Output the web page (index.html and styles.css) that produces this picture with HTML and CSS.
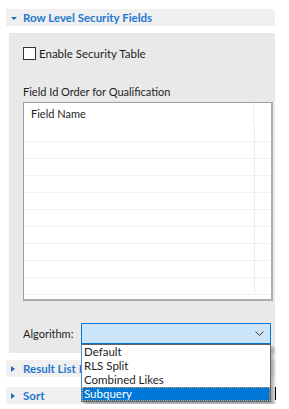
FILE: index.html
```html
<!DOCTYPE html>
<html lang="en">
<head>
  <meta charset="UTF-8" />
  <meta name="viewport" content="width=device-width, initial-scale=1" />
  <title>Row Level Security Fields</title>
  <link rel="stylesheet" href="styles.css">
</head>
<body>

<div class="editor">
  <div class="section-head">
    <span class="twisty open"></span>
    <span class="section-title">Row Level Security Fields</span>
  </div>

  <div class="section-body">
    <label class="check-row">
      <span class="checkbox"></span>
      <span>Enable Security Table</span>
    </label>

    <div class="field-label">Field Id Order for Qualification</div>

    <div class="grid">
      <div class="grid-head">
        <div class="cell">Field Name</div>
        <div class="cell spare"></div>
      </div>
      <div class="grid-row"><div class="cell"></div><div class="cell spare"></div></div>
      <div class="grid-row"><div class="cell"></div><div class="cell spare"></div></div>
      <div class="grid-row"><div class="cell"></div><div class="cell spare"></div></div>
      <div class="grid-row"><div class="cell"></div><div class="cell spare"></div></div>
      <div class="grid-row"><div class="cell"></div><div class="cell spare"></div></div>
      <div class="grid-row"><div class="cell"></div><div class="cell spare"></div></div>
      <div class="grid-row"><div class="cell"></div><div class="cell spare"></div></div>
      <div class="grid-row"><div class="cell"></div><div class="cell spare"></div></div>
      <div class="grid-row"><div class="cell"></div><div class="cell spare"></div></div>
      <div class="grid-row"><div class="cell"></div><div class="cell spare"></div></div>
    </div>

    <div class="algo-row">
      <span class="algo-label">Algorithm:</span>
      <div class="combo-wrap">
        <div class="combo">
          <svg class="chevron" width="9" height="6" viewBox="0 0 9 6">
            <path d="M0.5 0.5 L4.5 4.5 L8.5 0.5" fill="none" stroke="#3c3c3c" stroke-width="1"/>
          </svg>
        </div>
        <ul class="dropdown">
          <li>Default</li>
          <li>RLS Split</li>
          <li>Combined Likes</li>
          <li class="selected">Subquery</li>
        </ul>
      </div>
    </div>
  </div>

  <div class="section-head collapsed-gap">
    <span class="twisty"></span>
    <span class="section-title">Result List F</span>
  </div>

  <div class="section-head last">
    <span class="twisty"></span>
    <span class="section-title">Sort</span>
    <span class="caret"></span>
  </div>
</div>

</body>
</html>
```

FILE: styles.css
```css
html, body {
  margin: 0;
  padding: 0;
  background: #fff;
  font-family: Lato, "Noto Sans", sans-serif;
  font-size: 11px;
  color: #1e1e1e;
  overflow: hidden;
}

.editor {
  padding: 9px 14px 0 6px;
  width: 269px;
}

.section-head {
  position: relative;
  display: flex;
  align-items: center;
  height: 17px;
  background: #f0f0f0;
}

.section-head.collapsed-gap {
  margin-top: 7px;
}

.section-head.last {
  margin-top: 10px;
}

.twisty {
  width: 0;
  height: 0;
  margin: 0 8px 0 5px;
  border-left: 4px solid #1b6dbd;
  border-top: 3px solid transparent;
  border-bottom: 3px solid transparent;
}

.twisty.open {
  border-top: 3px solid #1b6dbd;
  border-left: 3px solid transparent;
  border-right: 3px solid transparent;
  border-bottom: 0;
  margin: 1px 6px 0 5px;
}

.section-title {
  font-size: 11.5px;
  font-weight: bold;
  color: #1f78d1;
  white-space: nowrap;
}

.caret {
  position: absolute;
  left: 269px;
  top: 0;
  width: 1px;
  height: 13px;
  background: #000;
}

.section-body {
  position: relative;
  margin: 7px 0 0 3px;
  height: 320px;
  padding: 14px 0 0 14px;
  box-sizing: border-box;
  background: #e9e9e9;
}

.check-row {
  display: flex;
  align-items: center;
  gap: 3px;
  height: 13px;
  font-size: 11.5px;
}

.checkbox {
  width: 11px;
  height: 11px;
  border: 1px solid #333;
  background: #fff;
}

.field-label {
  margin-top: 24px;
  line-height: 16px;
}

.grid {
  margin-top: 2px;
  width: 247px;
  height: 196px;
  background: #fff;
  border: 1px solid #a0a0a0;
  border-right-width: 2px;
  border-bottom-width: 2px;
  border-right-color: #adadad;
  border-bottom-color: #adadad;
  overflow: hidden;
}

.grid-head,
.grid-row {
  display: grid;
  grid-template-columns: 229px 1fr;
}

.grid-head {
  height: 22px;
}

.grid-head .cell {
  padding: 3px 0 0 7px;
  line-height: 16px;
}

.grid-row {
  height: 16px;
  margin: 0 1px;
  border-bottom: 1px solid #f0f0f0;
}

.cell.spare {
  border-left: 1px solid #e6edf5;
  padding: 0;
}

.algo-row {
  display: flex;
  align-items: center;
  margin-top: 22px;
  height: 21px;
}

.algo-label {
  width: 58px;
}

.combo-wrap {
  position: relative;
}

.combo {
  box-sizing: border-box;
  width: 190px;
  height: 21px;
  background: #cce4f7;
  border: 1px solid #0078d7;
  display: flex;
  align-items: center;
  justify-content: flex-end;
  padding-right: 6px;
}

.dropdown {
  position: absolute;
  left: 0;
  top: 21px;
  z-index: 5;
  width: 190px;
  box-sizing: border-box;
  margin: 0;
  padding: 0;
  list-style: none;
  background: #fff;
  border: 1px solid #646464;
  border-left-color: #4a8ed6;
  box-shadow: 3px 3px 3px rgba(0, 0, 0, 0.3);
}

.dropdown li {
  height: 14px;
  line-height: 14px;
  padding-left: 2px;
  font-size: 11.5px;
  white-space: nowrap;
}

.dropdown li.selected {
  background: #0078d7;
  color: #fff;
  outline: 1px dotted #e6a15a;
  outline-offset: -1px;
}
```
